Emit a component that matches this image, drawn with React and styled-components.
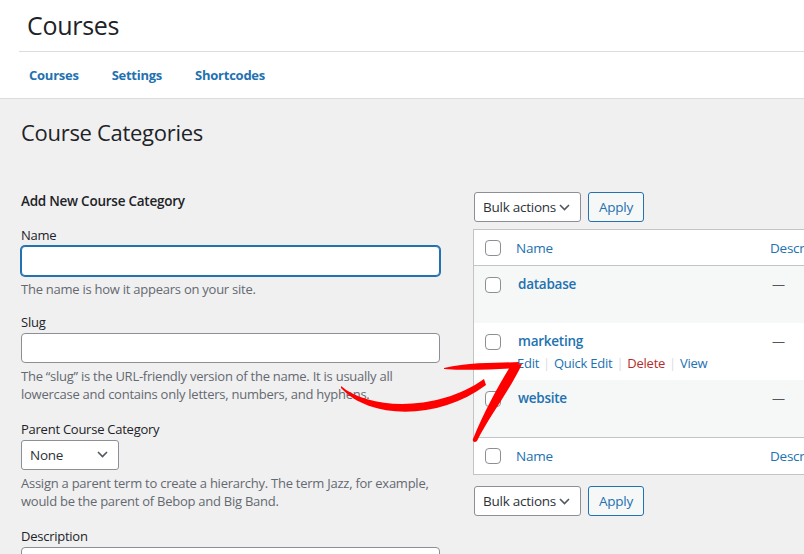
import React from 'react';
import styled, { createGlobalStyle } from 'styled-components';

const Global = createGlobalStyle`
    html, body {
        margin: 0;
        padding: 0;
        background: #f0f0f1;
        overflow: hidden;
    }
    body {
        font-family: "Open Sans", "Noto Sans", sans-serif;
        font-size: 13px;
        letter-spacing: -0.25px;
        color: #3c434a;
    }
    * { box-sizing: border-box; }
`

const Page = styled.div`
    position: relative;
    width: 1100px;
    min-height: 554px;
`

const Header = styled.header`
    background: #ffffff;
    border-bottom: 1px solid #dcdcde;
`

const TitleBar = styled.div`
    margin-left: 19px;
    height: 52px;
    border-bottom: 1px solid #dcdcde;
    display: flex;
    align-items: center;
    padding-left: 8px;
`

const PageTitle = styled.h1`
    margin: 0;
    font-size: 25px;
    font-weight: 500;
    letter-spacing: -0.3px;
    color: #1d2327;
    line-height: 1;
    padding-bottom: 1px;
`

const Tabs = styled.nav`
    display: flex;
    gap: 33px;
    height: 46px;
    align-items: center;
    padding-left: 29px;
`

const Tab = styled.a`
    font-size: 13px;
    font-weight: 700;
    color: #2271b1;
    text-decoration: none;
`

const Wrap = styled.div`
    padding-left: 21px;
`

const Heading = styled.h1`
    margin: 0;
    padding-top: 18px;
    font-size: 22px;
    font-weight: 400;
    letter-spacing: -0.3px;
    line-height: 30px;
    color: #1d2327;
`

const Columns = styled.div`
    display: flex;
    gap: 33px;
    margin-top: 44px;
`

const LeftCol = styled.div`
    width: 419px;
    flex: none;
`

const FormTitle = styled.h2`
    margin: 0 0 15px;
    font-size: 13.5px;
    font-weight: 600;
    line-height: 20px;
    color: #1d2327;
`

const Field = styled.div`
    margin-bottom: ${props => props.tight ? '14px' : '16px'};
`

const Label = styled.label`
    display: block;
    line-height: 18px;
    color: #1d2327;
`

const TextInput = styled.div`
    margin-top: 2px;
    height: ${props => props.tall ? '60px' : '30px'};
    background: #ffffff;
    border: 1px solid ${props => props.focus ? '#2271b1' : '#8c8f94'};
    box-shadow: ${props => props.focus ? '0 0 0 1px #2271b1' : 'none'};
    border-radius: 4px;
`

const Help = styled.p`
    margin: 4px 0 0;
    line-height: 18.5px;
    color: #646970;
`

const Select = styled.div`
    margin-top: 2px;
    width: ${props => props.w}px;
    height: 30px;
    display: flex;
    align-items: center;
    justify-content: space-between;
    padding: 0 10px 0 8px;
    background: #ffffff;
    border: 1px solid #8c8f94;
    border-radius: 3px;
    font-size: 13.5px;
    white-space: nowrap;
    color: #2c3338;
`

const RightCol = styled.div`
    width: 560px;
    flex: none;
    padding-top: 1px;
`

const TableNav = styled.div`
    display: flex;
    gap: 7px;
    margin: ${props => props.bottom ? '11px 0 0' : '0 0 7px'};
    padding-left: 1px;
    & > * { margin-top: 0; }
`

const Button = styled.div`
    height: 30px;
    display: flex;
    align-items: center;
    padding: 0 10px;
    border: 1px solid #2271b1;
    border-radius: 3px;
    background: #f6f7f7;
    color: #2271b1;
    font-size: 13.5px;
`

const Table = styled.div`
    border: 1px solid #c3c4c7;
    background: #ffffff;
`

const Row = styled.div`
    display: grid;
    grid-template-columns: 42px 254px 1fr;
    height: ${props => props.head === 'top' ? '36px' : props.head ? '37px' : '57px'};
    align-items: ${props => props.head ? 'center' : 'start'};
    padding-top: ${props => props.head ? '0' : '9px'};
    background: ${props => props.striped ? '#f6f7f7' : '#ffffff'};
    border-bottom: ${props => props.head === 'top' ? '1px solid #c3c4c7' : 'none'};
    border-top: ${props => props.head === 'bottom' ? '1px solid #c3c4c7' : 'none'};
`

const Check = styled.span`
    display: block;
    width: 16px;
    height: 16px;
    margin-left: 11px;
    margin-top: ${props => props.head ? '0' : '2px'};
    border: 1px solid #8c8f94;
    border-radius: 4px;
    background: #ffffff;
`

const ColTitle = styled.span`
    font-size: 13.5px;
    white-space: nowrap;
    color: #2271b1;
`

const TermName = styled.a`
    display: block;
    padding-left: 2px;
    font-size: 13.5px;
    font-weight: 600;
    color: #2271b1;
    line-height: 18px;
`

const Dash = styled.span`
    padding-left: 2px;
    line-height: 18px;
    color: #50575e;
`

const RowActions = styled.div`
    display: flex;
    gap: 4px;
    padding-left: 1px;
    margin-top: 4px;
    line-height: 18px;
    color: #dcdcde;
`

const Action = styled.a`
    color: ${props => props.danger ? '#b32d2e' : '#2271b1'};
`

const Arrow = styled.svg`
    position: absolute;
    left: 0;
    top: 0;
    pointer-events: none;
`

const Chevron = () => (
    <svg width="11" height="7" viewBox="0 0 11 7">
        <path d="M1 1l4.5 4.5L10 1" fill="none" stroke="#50575e" strokeWidth="1.6" />
    </svg>
)

const Nav = ({ bottom }) => (
    <TableNav bottom={bottom}>
        <Select w={107}>Bulk actions <Chevron /></Select>
        <Button>Apply</Button>
    </TableNav>
)

const HeadRow = ({ edge }) => (
    <Row head={edge}>
        <Check head />
        <ColTitle>Name</ColTitle>
        <ColTitle>Description</ColTitle>
    </Row>
)

const terms = [
    { name: 'database', striped: true },
    { name: 'marketing', actions: true },
    { name: 'website', striped: true },
]

export default function App() {
    return (
        <Page>
            <Global />
            <Header>
                <TitleBar><PageTitle>Courses</PageTitle></TitleBar>
                <Tabs>
                    <Tab>Courses</Tab>
                    <Tab>Settings</Tab>
                    <Tab>Shortcodes</Tab>
                </Tabs>
            </Header>

            <Wrap>
                <Heading>Course Categories</Heading>
                <Columns>
                    <LeftCol>
                        <FormTitle>Add New Course Category</FormTitle>
                        <Field tight>
                            <Label>Name</Label>
                            <TextInput focus />
                            <Help>The name is how it appears on your site.</Help>
                        </Field>
                        <Field>
                            <Label>Slug</Label>
                            <TextInput />
                            <Help>The &ldquo;slug&rdquo; is the URL-friendly version of the name. It is usually all lowercase and contains only letters, numbers, and hyphens.</Help>
                        </Field>
                        <Field>
                            <Label>Parent Course Category</Label>
                            <Select w={98}>None <Chevron /></Select>
                            <Help>Assign a parent term to create a hierarchy. The term Jazz, for example, would be the parent of Bebop and Big Band.</Help>
                        </Field>
                        <Field>
                            <Label>Description</Label>
                            <TextInput tall />
                        </Field>
                    </LeftCol>

                    <RightCol>
                        <Nav />
                        <Table>
                            <HeadRow edge="top" />
                            {terms.map(t => (
                                <Row key={t.name} striped={t.striped}>
                                    <Check />
                                    <div>
                                        <TermName>{t.name}</TermName>
                                        {t.actions && (
                                            <RowActions>
                                                <Action>Edit</Action>|
                                                <Action>Quick Edit</Action>|
                                                <Action danger>Delete</Action>|
                                                <Action>View</Action>
                                            </RowActions>
                                        )}
                                    </div>
                                    <Dash>—</Dash>
                                </Row>
                            ))}
                            <HeadRow edge="bottom" />
                        </Table>
                        <Nav bottom />
                    </RightCol>
                </Columns>
            </Wrap>

            <Arrow width="804" height="554" viewBox="0 0 804 554">
                <path fill="#ff0000" d="M341,386 C370,411 440,411 484,379 L486,385 C440,420 370,420 341,388 Z" />
                <path fill="#ff0000" d="M444,368 C470,362 500,363 519,362 L518,368 C495,369 470,371 444,369 Z" />
                <path fill="#ff0000" d="M511,365 L522,364 C510,390 490,415 477,441 C475,443 472,442 473,439 C484,412 497,388 511,365 Z" />
            </Arrow>
        </Page>
    );
}
